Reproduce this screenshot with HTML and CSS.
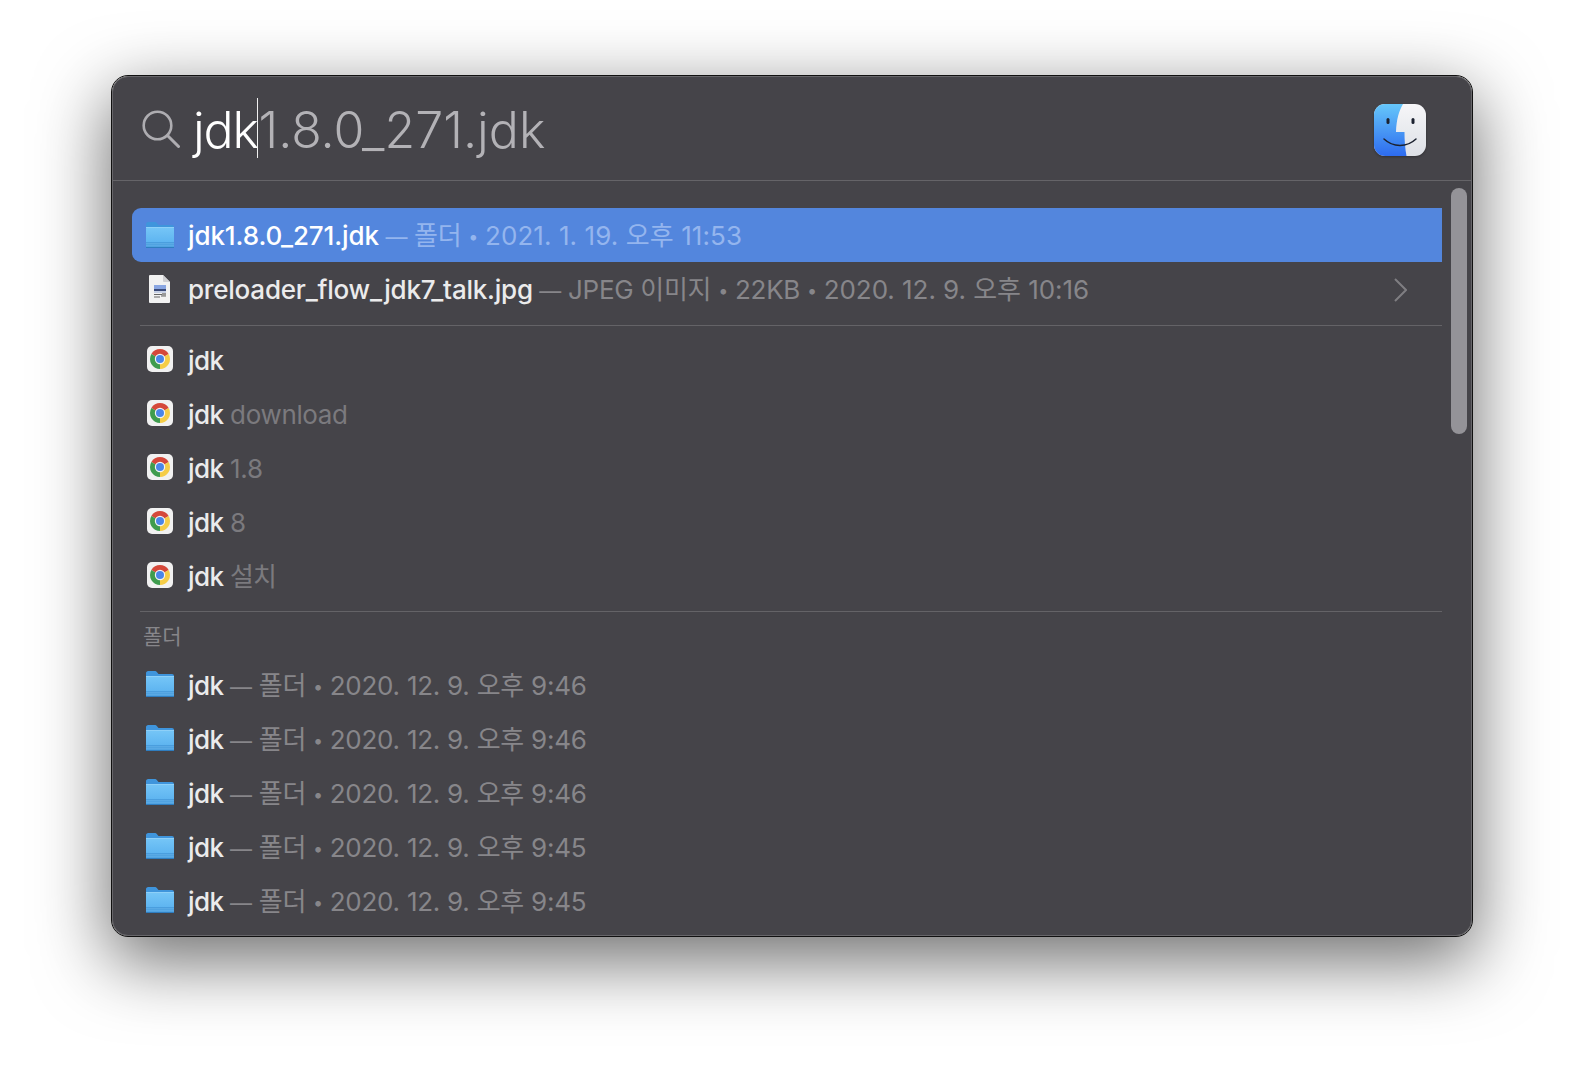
FILE: index.html
```html
<!DOCTYPE html>
<html lang="ko">
<head>
<meta charset="utf-8">
<title>Spotlight</title>
<link rel="stylesheet" href="styles.css">
</head>
<body>
<svg class="defs" aria-hidden="true">
  <defs>
    <linearGradient id="fold" x1="0" y1="0" x2="0" y2="1">
      <stop offset="0" stop-color="#76c6f7"/>
      <stop offset="1" stop-color="#55aeee"/>
    </linearGradient>
    <linearGradient id="findL" x1="0" y1="0" x2="0" y2="1">
      <stop offset="0" stop-color="#66c7fa"/>
      <stop offset="1" stop-color="#2d6bef"/>
    </linearGradient>
    <linearGradient id="findR" x1="0" y1="0" x2="0" y2="1">
      <stop offset="0" stop-color="#f6f6f8"/>
      <stop offset="1" stop-color="#dde0e6"/>
    </linearGradient>
    <symbol id="i-folder" viewBox="0 0 30 28">
      <path d="M1 7V3.200C1 2 1.900 1 3.200 1h6.600c.9 0 1.400.3 2 1l1.700 2H27c1.200 0 2 .9 2 2v2H1z" fill="#3f95dc"/>
      <rect x="1" y="6" width="28" height="21" rx="1.800" fill="url(#fold)"/>
      <rect x="1" y="6" width="28" height="1" fill="#8ed0f8"/>
      <path d="M1 21h28v4.200c0 1-.8 1.800-1.800 1.800H2.800C1.800 27 1 26.200 1 25.200z" fill="#4a9ede"/>
      <path d="M1 22.800h28M1 24.800h28" stroke="#6db8ee" stroke-width=".7"/>
      <path d="M1 26.500h28" stroke="#2f7dbf" stroke-width="1"/>
    </symbol>
    <symbol id="i-chrome" viewBox="0 0 26 26">
      <rect width="26" height="26" rx="5" fill="#f1f1f1"/>
      <path d="M13 13L4.340 8A10 10 0 0 1 21.660 8z" fill="#d5483a"/>
      <path d="M13 13L21.660 8A10 10 0 0 1 13 23z" fill="#f5cd47"/>
      <path d="M13 13L13 23A10 10 0 0 1 4.340 8z" fill="#3f9c4e"/>
      <circle cx="13" cy="13" r="5.200" fill="#f4f4f4"/>
      <circle cx="13" cy="13" r="4" fill="#4a86e8"/>
    </symbol>
    <symbol id="i-doc" viewBox="0 0 22 28">
      <path d="M1 0h13l7 7v20a1 1 0 0 1-1 1H1a1 1 0 0 1-1-1V1a1 1 0 0 1 1-1z" fill="#f2f2f2"/>
      <path d="M14 0l7 7h-6a1 1 0 0 1-1-1z" fill="#cfcfd2"/>
      <rect x="5" y="10" width="12" height="4" fill="#8aa6e2"/>
      <rect x="5" y="14" width="12" height="2" fill="#3a4a78"/>
      <rect x="5" y="16" width="12" height="2" fill="#c6d0e6"/>
      <path d="M5 19.500h8M12 21h5M5 22h6" stroke="#666" stroke-width="1"/>
      <rect x="13" y="18" width="4" height="3" fill="#999"/>
    </symbol>
  </defs>
</svg>

<main class="window">
  <header class="search">
    <svg class="search-icon" viewBox="0 0 38 38" aria-hidden="true">
      <circle cx="15.500" cy="15.500" r="13.800" fill="none" stroke="#aeadb1" stroke-width="2.600"/>
      <path d="M25.500 25.500L36.500 36.500" fill="none" stroke="#aeadb1" stroke-width="3" stroke-linecap="round"/>
    </svg>
    <div class="query"><span class="typed">jdk</span><i class="caret"></i><span class="hint">1.8.0_271.jdk</span></div>
    <svg class="finder" viewBox="0 0 52 52" aria-hidden="true">
      <defs><clipPath id="tile"><rect width="52" height="52" rx="11"/></clipPath></defs>
      <g clip-path="url(#tile)">
        <rect width="52" height="52" fill="url(#findR)"/>
        <path d="M0 0h29C25 7 22.500 15 22 28h8.500C30.500 36 31 44 32.500 52H0z" fill="url(#findL)"/>
      </g>
      <rect x="12.500" y="14" width="3" height="6" rx="1.500" fill="#1c2230"/>
      <rect x="37.500" y="14" width="3" height="6" rx="1.500" fill="#1c2230"/>
      <path d="M10 35c9 8.500 23 8.500 32 0" fill="none" stroke="#1c2230" stroke-width="1.500" stroke-linecap="round"/>
    </svg>
  </header>

  <div class="results">
    <div class="scrollbar"></div>
    <section class="group first">
      <div class="row selected">
        <svg class="ic ic-folder"><use href="#i-folder"/></svg>
        <p class="label"><span class="name">jdk1.8.0_271.jdk</span> <span class="meta"><span class="kind"><span class="dash">—</span> 폴더 <span class="dot">•</span></span> <span class="date wide">2021. 1. 19. 오후 11:53</span></span></p>
      </div>
      <div class="row">
        <svg class="ic ic-doc"><use href="#i-doc"/></svg>
        <p class="label"><span class="name long">preloader_flow_jdk7_talk.jpg</span> <span class="meta"><span class="kind long"><span class="dash">—</span> JPEG 이미지 <span class="dot">•</span> 22KB <span class="dot">•</span></span> <span class="date mid">2020. 12. 9. 오후 10:16</span></span></p>
        <svg class="chevron" viewBox="0 0 13 24" aria-hidden="true"><path d="M1 1l11 11L1 23" fill="none" stroke="#7f7e82" stroke-width="2"/></svg>
      </div>
    </section>
    <section class="group">
      <div class="row"><svg class="ic ic-chrome"><use href="#i-chrome"/></svg><p class="label"><span class="name">jdk</span></p></div>
      <div class="row"><svg class="ic ic-chrome"><use href="#i-chrome"/></svg><p class="label"><span class="name">jdk</span> <span class="suggest">download</span></p></div>
      <div class="row"><svg class="ic ic-chrome"><use href="#i-chrome"/></svg><p class="label"><span class="name">jdk</span> <span class="suggest">1.8</span></p></div>
      <div class="row"><svg class="ic ic-chrome"><use href="#i-chrome"/></svg><p class="label"><span class="name">jdk</span> <span class="suggest">8</span></p></div>
      <div class="row"><svg class="ic ic-chrome"><use href="#i-chrome"/></svg><p class="label"><span class="name">jdk</span> <span class="suggest ko">설치</span></p></div>
    </section>
    <section class="group last">
      <h2 class="group-title">폴더</h2>
      <div class="row"><svg class="ic ic-folder"><use href="#i-folder"/></svg><p class="label"><span class="name">jdk</span> <span class="meta"><span class="kind"><span class="dash">—</span> 폴더 <span class="dot">•</span></span> <span class="date">2020. 12. 9. 오후 9:46</span></span></p></div>
      <div class="row"><svg class="ic ic-folder"><use href="#i-folder"/></svg><p class="label"><span class="name">jdk</span> <span class="meta"><span class="kind"><span class="dash">—</span> 폴더 <span class="dot">•</span></span> <span class="date">2020. 12. 9. 오후 9:46</span></span></p></div>
      <div class="row"><svg class="ic ic-folder"><use href="#i-folder"/></svg><p class="label"><span class="name">jdk</span> <span class="meta"><span class="kind"><span class="dash">—</span> 폴더 <span class="dot">•</span></span> <span class="date">2020. 12. 9. 오후 9:46</span></span></p></div>
      <div class="row"><svg class="ic ic-folder"><use href="#i-folder"/></svg><p class="label"><span class="name">jdk</span> <span class="meta"><span class="kind"><span class="dash">—</span> 폴더 <span class="dot">•</span></span> <span class="date">2020. 12. 9. 오후 9:45</span></span></p></div>
      <div class="row"><svg class="ic ic-folder"><use href="#i-folder"/></svg><p class="label"><span class="name">jdk</span> <span class="meta"><span class="kind"><span class="dash">—</span> 폴더 <span class="dot">•</span></span> <span class="date">2020. 12. 9. 오후 9:45</span></span></p></div>
    </section>
  </div>
</main>
</body>
</html>
```

FILE: styles.css
```css
* { box-sizing: border-box; }
html, body { margin: 0; height: 100%; }
body {
  background: #fff;
  padding: 76px 0 0 112px;
  overflow: hidden;
  font-family: Inter, "Noto Sans CJK KR", "Noto Sans", sans-serif;
}
.defs { position: absolute; width: 0; height: 0; }
.window {
  width: 1360px;
  height: 860px;
  background: #454449;
  border-radius: 16px;
  border: 1px solid #67666a;
  outline: 1px solid #111;
  box-shadow: 0 22px 70px 4px rgba(0, 0, 0, .56);
  overflow: hidden;
  display: flex;
  flex-direction: column;
}
.search {
  height: 104px;
  flex: none;
  display: flex;
  align-items: center;
  padding: 1px 45px 0 29px;
  border-bottom: 1px solid #656468;
}
.search-icon { width: 38px; height: 38px; flex: none; }
.query {
  flex: 1;
  margin-left: 13px;
  font-size: 50px;
  line-height: 60px;
  white-space: nowrap;
  display: flex;
  align-items: center;
  margin-top: -2px;
  letter-spacing: -1.1px;
  font-weight: 350;
}
.typed { color: #fff; padding-top: 4px; }
.hint { color: #b3b2b6; padding-top: 4px; letter-spacing: .02px; }
.caret { width: 1.500px; height: 60px; background: #f0f0f0; flex: none; margin-left: -1px; }
.finder { width: 52px; height: 52px; flex: none; margin-top: 2px; filter: drop-shadow(0 1px 1px rgba(0,0,0,.3)); }

.results { position: relative; flex: 1; padding: 27px 29px 0 19px; min-height: 0; }
.scrollbar {
  position: absolute;
  right: 4px;
  top: 7px;
  width: 16px;
  height: 246px;
  border-radius: 8px;
  background: #949398;
}
.group { padding-left: 8px; }
.group::after {
  content: "";
  display: block;
  height: 1px;
  margin-top: 8px;
  background: #646367;
}
.group.first::after { margin-top: 9px; }
.group + .group { padding-top: 7px; }
.group.last { padding-top: 0; }
.group.last::after { display: none; }
.group .row { margin-left: -8px; }
.group-title {
  margin: 0 0 0 3px;
  height: 46px;
  padding-top: 12px;
  font-size: 21px;
  line-height: 26px;
  font-weight: 400;
  color: #87868a;
}
.row {
  height: 54px;
  display: flex;
  align-items: center;
  padding-left: 56px;
  position: relative;
  border-radius: 9px 0 0 9px;
}
.row.selected { background: #5386dd; }
.label {
  margin: 0;
  padding-top: 2px;
  font-size: 26px;
  line-height: 52px;
  font-weight: 450;
  letter-spacing: -.5px;
  white-space: nowrap;
}
.name { color: #ebebec; }
.name.long { letter-spacing: -.21px; }
.selected .name { color: #fff; letter-spacing: -.1px; }
.meta { color: #87868a; line-height: 0; font-weight: 400; }
.suggest { color: #7b7a7e; line-height: 0; font-weight: 400; letter-spacing: -.35px; }
.suggest.ko { letter-spacing: -1px; }
.kind { letter-spacing: -.3px; }
.kind.long { letter-spacing: -.3px; }
.dash { font-size: 22px; }
.dot { font-size: 18px; vertical-align: 2px; }
.date { letter-spacing: -.25px; }
.date.wide { letter-spacing: .08px; }
.date.mid { letter-spacing: -.05px; }
.selected .meta { color: #94b5ee; }
.ic { position: absolute; }
.ic-folder { left: 13px; top: 13px; width: 30px; height: 28px; }
.last .ic-folder { top: 12px; }
.ic-doc { left: 17px; top: 13px; width: 22px; height: 28px; }
.ic-chrome { left: 15px; top: 13px; width: 26px; height: 26px; }
.chevron { position: absolute; right: 35px; top: 16px; width: 13px; height: 24px; }
```
